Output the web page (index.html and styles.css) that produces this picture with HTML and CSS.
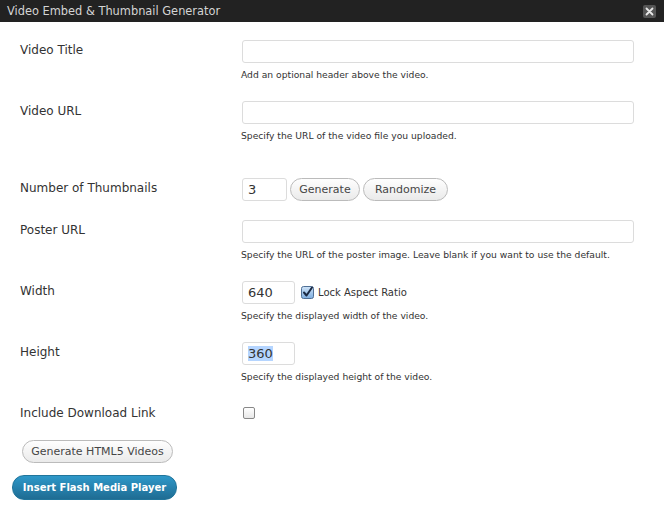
FILE: index.html
```html
<!DOCTYPE html>
<html>
<head>
<meta charset="utf-8">
<link rel="stylesheet" href="styles.css">
</head>
<body>
<div class="titlebar">
  <span class="title">Video Embed &amp; Thumbnail Generator</span>
  <span class="close"><svg width="13" height="13" viewBox="0 0 13 13"><path d="M3.5 3.5 L9.5 9.5 M9.5 3.5 L3.5 9.5" stroke="#e8e8e8" stroke-width="1.8" stroke-linecap="round"/></svg></span>
</div>
<div class="form">
  <div class="row r1">
    <div class="label">Video Title</div>
    <div class="field">
      <div class="input wide"></div>
      <div class="help">Add an optional header above the video.</div>
    </div>
  </div>
  <div class="row r2">
    <div class="label">Video URL</div>
    <div class="field">
      <div class="input wide"></div>
      <div class="help">Specify the URL of the video file you uploaded.</div>
    </div>
  </div>
  <div class="row r3">
    <div class="label">Number of Thumbnails</div>
    <div class="field">
      <div class="inline">
        <div class="input num">3</div>
        <span class="btn b-gen">Generate</span>
        <span class="btn b-rand">Randomize</span>
      </div>
    </div>
  </div>
  <div class="row r4">
    <div class="label">Poster URL</div>
    <div class="field">
      <div class="input wide"></div>
      <div class="help">Specify the URL of the poster image. Leave blank if you want to use the default.</div>
    </div>
  </div>
  <div class="row r5">
    <div class="label">Width</div>
    <div class="field">
      <div class="inline">
        <div class="input dim">640</div>
        <span class="check checked"><svg width="13" height="13" viewBox="0 0 13 13"><defs><linearGradient id="g" x1="0" y1="0" x2="0" y2="1"><stop offset="0" stop-color="#cfe3f7"/><stop offset="1" stop-color="#7eaee0"/></linearGradient></defs><rect x="0.5" y="0.5" width="12" height="12" rx="2" fill="url(#g)" stroke="#4f6f95"/><path d="M3 6.5 L5.5 9.5 L11 1.5" fill="none" stroke="#1b2a44" stroke-width="2" stroke-linecap="round" stroke-linejoin="round"/></svg></span>
        <span class="checklabel">Lock Aspect Ratio</span>
      </div>
      <div class="help">Specify the displayed width of the video.</div>
    </div>
  </div>
  <div class="row r6">
    <div class="label">Height</div>
    <div class="field">
      <div class="input dim"><span class="sel">360</span></div>
      <div class="help">Specify the displayed height of the video.</div>
    </div>
  </div>
  <div class="row r7">
    <div class="label">Include Download Link</div>
    <div class="field">
      <span class="check empty"></span>
    </div>
  </div>
  <div class="actions">
    <span class="btn big">Generate HTML5 Videos</span>
    <span class="btn primary">Insert Flash Media Player</span>
  </div>
</div>
</body>
</html>
```
FILE: styles.css
```css
* { box-sizing: border-box; }
html, body { margin: 0; padding: 0; background: #fff; }
body {
  width: 664px;
  height: 519px;
  font-family: "DejaVu Sans", "Liberation Sans", sans-serif;
  color: #333;
  overflow: hidden;
}
.titlebar {
  height: 22px;
  background: #222;
  display: flex;
  align-items: center;
  justify-content: space-between;
  padding: 0 8px 0 7px;
}
.title {
  color: #d4d4d4;
  font-size: 11.4px;
}
.close {
  width: 13px;
  height: 13px;
  background: #555;
  border-radius: 2px;
  display: flex;
}
.form { padding: 18px 0 0 0; }
.row {
  display: grid;
  grid-template-columns: 242px 392px;
  align-items: start;
}
.label {
  padding-left: 20px;
  padding-top: 3px;
  font-size: 12px;
  line-height: 14px;
  color: #333;
}
.field { display: flex; flex-direction: column; align-items: flex-start; }
.inline { display: flex; flex-direction: row; align-items: center; }
.input {
  height: 23px;
  border: 1px solid #dcdcdc;
  border-radius: 3px;
  background: #fff;
  font-size: 13px;
  line-height: 21px;
  padding-left: 5px;
  color: #333;
}
.input.wide { width: 392px; }
.input.num { width: 45px; }
.input.dim { width: 53px; }
.sel { background: #b5d5ff; }
.help {
  font-size: 9.2px;
  line-height: 14px;
  margin-top: 5px;
  margin-left: -1px;
  color: #333;
}
.r1 { height: 61px; }
.r2 { height: 77px; }
.r3 { height: 42px; }
.r4 { height: 61px; }
.r5 { height: 61px; }
.r6 { height: 60px; }
.r7 { height: 38px; }
.r7 .label { padding-top: 4px; }
.r7 .field { padding-top: 5px; padding-left: 1px; }
.btn {
  display: inline-block;
  height: 23px;
  border: 1px solid #bbb;
  border-radius: 12px;
  background: linear-gradient(#fefefe, #eaeaea);
  font-size: 11px;
  line-height: 21px;
  color: #464646;
  padding: 0 9px;
  white-space: nowrap;
  text-align: center;
}
.b-gen { width: 70px; margin-left: 3px; padding: 0; }
.b-rand { width: 85px; margin-left: 3px; padding: 0; }
.check { display: inline-flex; margin-left: 6px; }
.checklabel { font-size: 10px; margin-left: 4px; color: #333; }
.check.empty {
  width: 12px;
  height: 12px;
  border: 1px solid #888;
  border-radius: 2px;
  background: linear-gradient(#fff, #e8e8e8);
  margin-left: 0;
}
.actions {
  display: flex;
  flex-direction: column;
  align-items: flex-start;
}
.btn.big {
  margin-left: 22px;
  width: 151px;
  padding: 0;
}
.btn.primary {
  margin-left: 12px;
  margin-top: 12px;
  width: 165px;
  height: 25px;
  line-height: 23px;
  padding: 0;
  border: 1px solid #21759b;
  background: linear-gradient(#2e98c9, #1f6c93);
  color: #fff;
  font-weight: bold;
  font-size: 10px;
}
```
